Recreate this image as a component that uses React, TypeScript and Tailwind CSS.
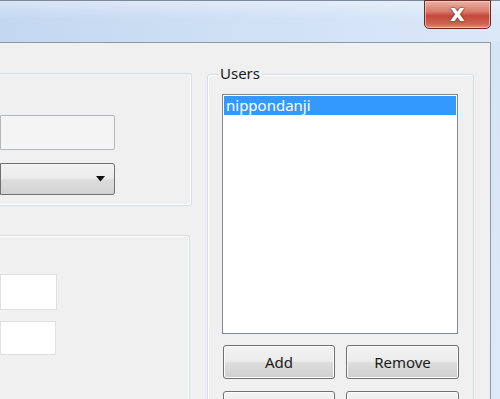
import React from "react";

const font = { fontFamily: '"Noto Sans", "Open Sans", "Liberation Sans", sans-serif' };

function WinButton({ label, className = "" }: { label?: string; className?: string }) {
  return (
    <div
      className={`h-[34px] rounded-[3px] border border-[#707070] bg-[linear-gradient(to_bottom,#f3f3f3_0%,#ebebeb_48%,#dddddd_52%,#cfcfcf_100%)] shadow-[inset_0_0_0_1px_#fcfcfc] flex items-center justify-center text-[15px] text-[#1b1b1b] ${className}`}
    >
      {label}
    </div>
  );
}

export default function App() {
  return (
    <div className="w-[500px] h-[399px] overflow-hidden flex flex-col bg-[#d9e7f7]" style={font}>
      {/* Title bar */}
      <div className="relative h-[42px] shrink-0 border-t border-[#7d8a99] bg-[linear-gradient(to_right,#c3d7f0_0%,#cfe0f5_45%,#dbe8f8_100%)]">
        <div className="absolute left-0 right-0 top-0 h-[18px] bg-[linear-gradient(to_bottom,rgba(255,255,255,0.35),rgba(255,255,255,0))]" />
        <div className="absolute left-[424px] top-[-1px] w-[67px] h-[29px] rounded-b-[5px] border border-[#6e2a22] bg-[linear-gradient(to_bottom,#eab3a5_0%,#d8796a_40%,#c4473a_55%,#cf6554_85%,#e0907f_100%)] shadow-[inset_0_0_0_1px_rgba(255,220,210,0.6)] flex items-center justify-center">
          <span className="text-[23px] font-bold leading-none text-white [text-shadow:0_0_2px_#5a1d16,0_0_1px_#5a1d16] mt-[-3px]" style={{ fontFamily: '"DejaVu Sans", sans-serif' }}>
            x
          </span>
        </div>
      </div>

      <div className="flex flex-1 min-h-0">
        {/* Client area */}
        <div className="w-[491px] shrink-0 h-full border-t border-r border-[#8c99a8] bg-[#f0f0f0] flex pt-[30px]">
          {/* Left column */}
          <div className="w-[192px] shrink-0 flex flex-col">
            <div className="h-[133px] shrink-0 border-t border-r border-b border-[#d5dfe5] rounded-r-[3px] shadow-[inset_-1px_-1px_0_#ffffff] pt-[41px] flex flex-col">
              <div className="w-[115px] h-[35px] border border-[#b4b8bc] rounded-r-[2px] bg-[#f4f4f4]" />
              <div className="mt-[13px] w-[115px] h-[32px] rounded-r-[3px] border border-[#707070] bg-[linear-gradient(to_bottom,#f3f3f3_0%,#ebebeb_48%,#dddddd_52%,#d3d3d3_100%)] flex items-center justify-end pr-[9px]">
                <svg width="9" height="6" viewBox="0 0 9 6">
                  <path d="M0 0 H9 L4.5 5.5 Z" fill="#111" />
                </svg>
              </div>
            </div>
            <div className="mt-[29px] w-[190px] flex-1 border-t border-r border-[#d5dfe5] rounded-tr-[3px] shadow-[inset_-1px_1px_0_#ffffff] pt-[38px] flex flex-col">
              <div className="w-[57px] h-[36px] border border-[#e0e0e0] bg-white" />
              <div className="mt-[11px] w-[56px] h-[34px] border border-[#e0e0e0] bg-white" />
            </div>
          </div>

          {/* Users group */}
          <div className="relative ml-[15px] mt-[1px] w-[267px] h-[400px] shrink-0 border border-[#d5dfe5] rounded-[3px] shadow-[inset_1px_1px_0_#ffffff] pl-[14px] pt-[19px]">
            <span className="absolute left-[10px] top-[-12px] px-[2px] bg-[#f0f0f0] text-[15px] leading-[20px] text-[#1a1a1a]">
              Users
            </span>
            <div className="w-[236px] h-[240px] border border-[#828790] bg-white p-[1px]">
              <div className="h-[19px] w-full bg-[#3399ff] text-white text-[15px] leading-[19px] pl-[2px]">
                nippondanji
              </div>
            </div>
            <div className="flex mt-[11px] ml-[1px]">
              <WinButton label="Add" className="w-[112px]" />
              <WinButton label="Remove" className="w-[113px] ml-[11px]" />
            </div>
            <div className="flex mt-[12px] ml-[1px]">
              <WinButton className="w-[112px]" />
              <WinButton className="w-[113px] ml-[11px]" />
            </div>
          </div>
        </div>
        {/* Window frame */}
        <div className="flex-1 bg-[linear-gradient(to_bottom,#d6e5f6,#dce9f8)]" />
      </div>
    </div>
  );
}
